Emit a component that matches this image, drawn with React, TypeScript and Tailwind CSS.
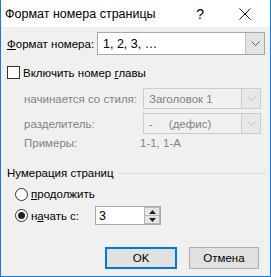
import type { ReactNode } from "react";

const font = { fontFamily: '"Liberation Sans", Arial, sans-serif' };

function Chevron({ color = "#5a5a5a" }: { color?: string }) {
	return (
		<svg width="9" height="5" viewBox="0 0 9 5" aria-hidden="true">
			<path d="M0.5 0.5 L4.5 4.5 L8.5 0.5" fill="none" stroke={color} strokeWidth="1" />
		</svg>
	);
}

function Combo({
	children,
	disabled,
	className,
}: {
	children: ReactNode;
	disabled?: boolean;
	className: string;
}) {
	return (
		<div
			className={`flex shrink-0 items-stretch border ${
				disabled ? "border-[#cccccc] bg-[#f0f0f0] text-[#838383]" : "border-[#a8a8a8] bg-white text-black"
			} ${className}`}
		>
			<div className="flex flex-1 items-center whitespace-pre pl-[5px]">{children}</div>
			<div
				className={`flex w-[19px] items-center justify-center border-l ${
					disabled ? "border-[#cccccc] bg-[#e8e8e8]" : "border-[#c4c4c4] bg-[#e3e3e3]"
				}`}
			>
				<Chevron color={disabled ? "#c0c0c0" : "#606060"} />
			</div>
		</div>
	);
}

function Radio({ checked }: { checked?: boolean }) {
	return (
		<span className="flex h-[13px] w-[13px] shrink-0 items-center justify-center rounded-full border border-[#333333] bg-white">
			{checked && <span className="h-[7px] w-[7px] rounded-full bg-[#222222]" />}
		</span>
	);
}

export default function App() {
	return (
		<div
			className="flex h-[277px] w-[271px] flex-col whitespace-nowrap border-x border-b border-[#1c7ad4] bg-[#f0f0f0] text-[11.5px] leading-[14px] text-black"
			style={font}
		>
			{/* title bar */}
			<div className="flex h-[27px] items-center bg-white pl-[4px]">
				<span className="flex-1 text-[12.5px] leading-[16px]">Формат номера страницы</span>
				<span className="mr-[35px] text-[14px] leading-[16px]">?</span>
				<svg width="12" height="12" viewBox="0 0 12 12" className="mr-[19px]" aria-hidden="true">
					<path d="M0.5 0.5 L11.5 11.5 M11.5 0.5 L0.5 11.5" stroke="#111" strokeWidth="1" />
				</svg>
			</div>

			<div className="flex flex-col pl-[6px] pr-[4px]">
				<div className="mt-[5px] flex h-[23px] items-center">
					<span className="w-[90px] shrink-0">
						<u>Ф</u>ормат номера:
					</span>
					<Combo className="h-[23px] w-[168px] text-[12.5px]">1, 2, 3, …</Combo>
				</div>

				<div className="mt-[11px] flex h-[13px] items-center gap-[3px]">
					<span className="h-[13px] w-[13px] shrink-0 border border-[#333333] bg-white" />
					<span>
						Включить номер <u>г</u>лавы
					</span>
				</div>

				<div className="mt-[9px] flex h-[21px] items-center text-[#838383]">
					<span className="ml-[17px] w-[119px] shrink-0">начинается со стиля:</span>
					<Combo disabled className="h-[21px] w-[118px]">
						Заголовок 1
					</Combo>
				</div>
				<div className="mt-[4px] flex h-[21px] items-center text-[#838383]">
					<span className="ml-[17px] w-[119px] shrink-0">разделитель:</span>
					<Combo disabled className="h-[21px] w-[118px]">
						{"-     (дефис)"}
					</Combo>
				</div>
				<div className="mt-[2px] flex h-[14px] items-center text-[#838383]">
					<span className="ml-[17px] w-[116px] shrink-0">Примеры:</span>
					<span>1-1, 1-A</span>
				</div>

				<div className="mt-[16px] flex h-[14px] items-center gap-[5px]">
					<span>Нумерация страниц</span>
					<span className="h-px flex-1 bg-[#dcdcdc]" />
				</div>

				<div className="mt-[7px] flex h-[14px] items-center gap-[3px] pl-[8px]">
					<Radio />
					<span>
						<u>п</u>родолжить
					</span>
				</div>

				<div className="mt-[5px] flex h-[19px] items-center pl-[8px]">
					<Radio checked />
					<span className="ml-[3px] w-[64px] shrink-0">
						н<u>а</u>чать с:
					</span>
					<div className="flex h-[19px] w-[66px] shrink-0 border border-[#a8a8a8] bg-white">
						<span className="flex flex-1 items-center pl-[3px] text-[12.5px]">3</span>
						<div className="flex w-[16px] flex-col">
							<div className="flex flex-1 items-center justify-center border border-[#b8b8b8] bg-[#e6e6e6]">
								<svg width="7" height="4" viewBox="0 0 7 4" aria-hidden="true">
									<path d="M0 4 L3.5 0 L7 4 Z" fill="#222" />
								</svg>
							</div>
							<div className="flex flex-1 items-center justify-center border border-t-0 border-[#b8b8b8] bg-[#e6e6e6]">
								<svg width="7" height="4" viewBox="0 0 7 4" aria-hidden="true">
									<path d="M0 0 L3.5 4 L7 0 Z" fill="#222" />
								</svg>
							</div>
						</div>
					</div>
				</div>

				<div className="mt-[22px] flex h-[22px] justify-end gap-[12px] pr-[7px]">
					<button
						type="button"
						className="h-[22px] w-[72px] border-2 border-[#0078d7] bg-[#e1e1e1] text-[11.5px]"
					>
						OK
					</button>
					<button
						type="button"
						className="h-[22px] w-[70px] border border-[#adadad] bg-[#e1e1e1] text-[11.5px]"
					>
						Отмена
					</button>
				</div>
			</div>
		</div>
	);
}
